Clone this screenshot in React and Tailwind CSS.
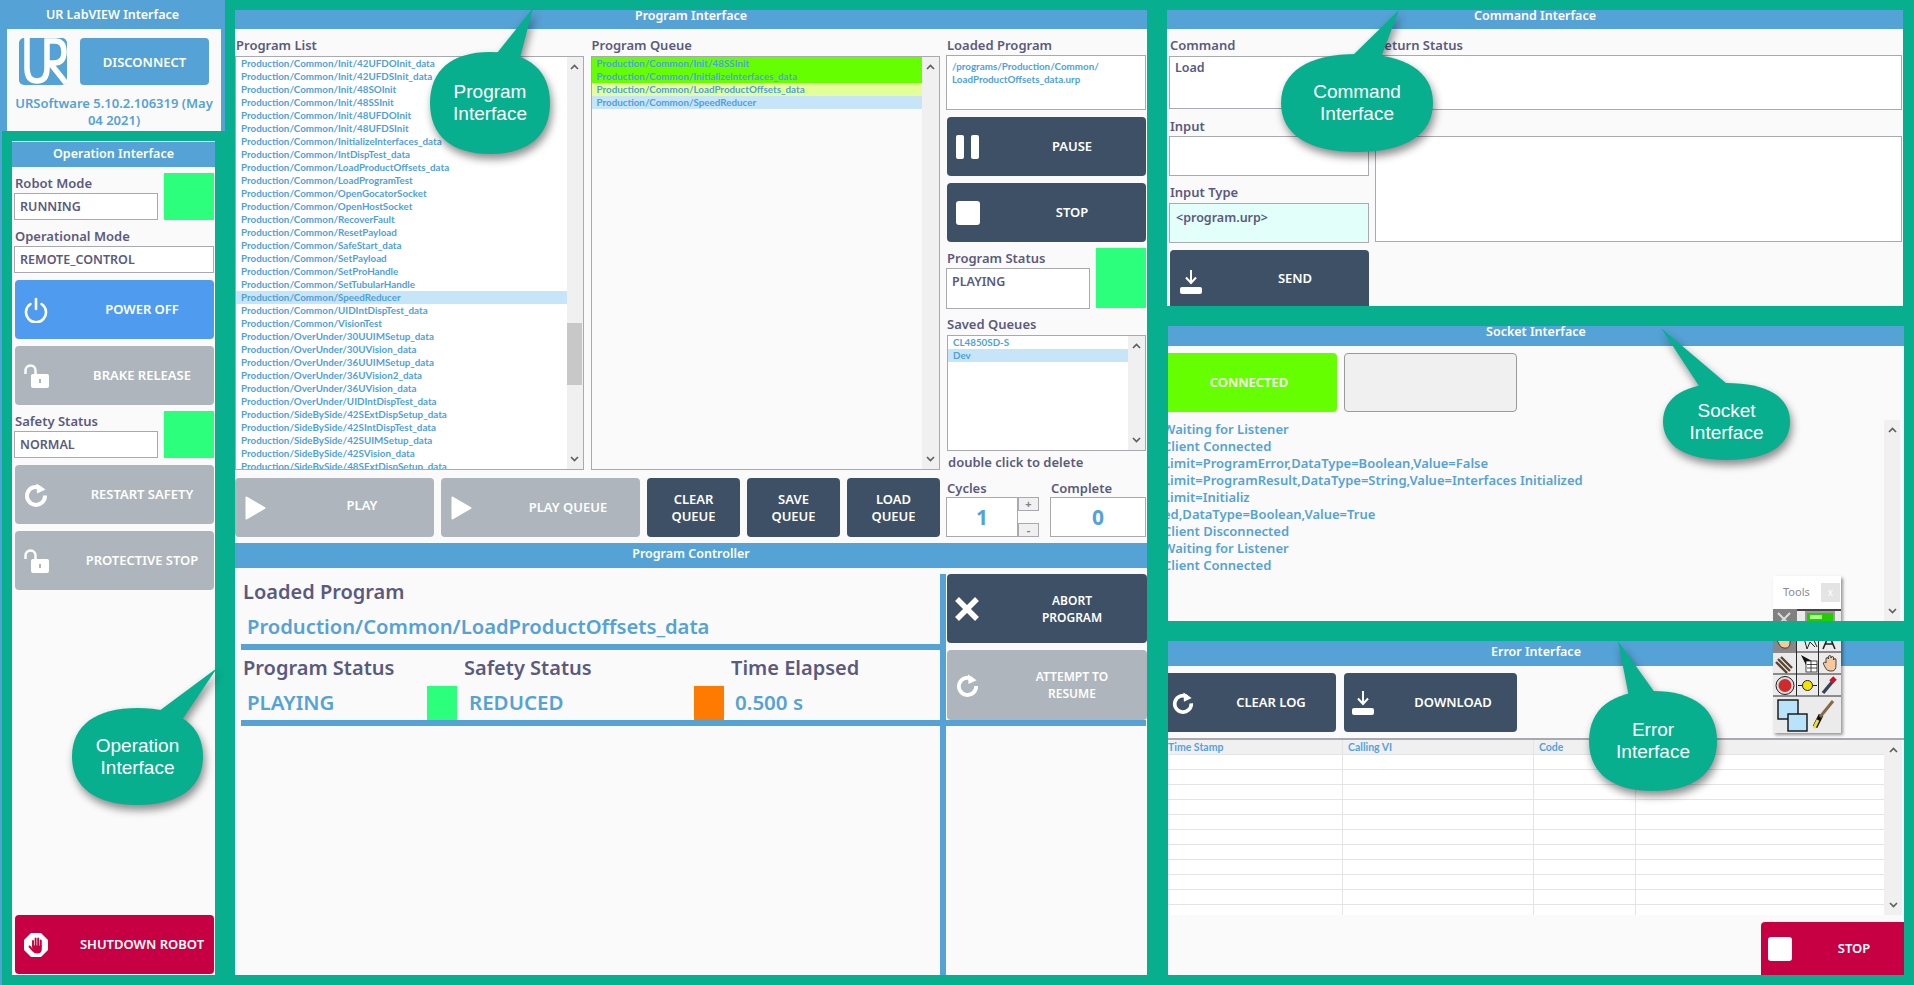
const listItems = [
  "Production/Common/Init/42UFDOInit_data",
  "Production/Common/Init/42UFDSInit_data",
  "Production/Common/Init/48SOInit",
  "Production/Common/Init/48SSInit",
  "Production/Common/Init/48UFDOInit",
  "Production/Common/Init/48UFDSInit",
  "Production/Common/InitializeInterfaces_data",
  "Production/Common/IntDispTest_data",
  "Production/Common/LoadProductOffsets_data",
  "Production/Common/LoadProgramTest",
  "Production/Common/OpenGocatorSocket",
  "Production/Common/OpenHostSocket",
  "Production/Common/RecoverFault",
  "Production/Common/ResetPayload",
  "Production/Common/SafeStart_data",
  "Production/Common/SetPayload",
  "Production/Common/SetProHandle",
  "Production/Common/SetTubularHandle",
  "Production/Common/SpeedReducer",
  "Production/Common/UIDIntDispTest_data",
  "Production/Common/VisionTest",
  "Production/OverUnder/30UUIMSetup_data",
  "Production/OverUnder/30UVision_data",
  "Production/OverUnder/36UUIMSetup_data",
  "Production/OverUnder/36UVision2_data",
  "Production/OverUnder/36UVision_data",
  "Production/OverUnder/UIDIntDispTest_data",
  "Production/SideBySide/42SExtDispSetup_data",
  "Production/SideBySide/42SIntDispTest_data",
  "Production/SideBySide/42SUIMSetup_data",
  "Production/SideBySide/42SVision_data",
  "Production/SideBySide/48SExtDispSetup_data",
];

const queueItems = [
  ["Production/Common/Init/48SSInit", "bg-[#66ff00]"],
  ["Production/Common/InitializeInterfaces_data", "bg-[#66ff00]"],
  ["Production/Common/LoadProductOffsets_data", "bg-[#e4ff9a]"],
  ["Production/Common/SpeedReducer", "bg-[#c7e5f8]"],
];

const logLines = [
  "Waiting for Listener",
  "Client Connected",
  "Limit=ProgramError,DataType=Boolean,Value=False",
  "Limit=ProgramResult,DataType=String,Value=Interfaces Initialized",
  "Limit=Initializ",
  "ed,DataType=Boolean,Value=True",
  "Client Disconnected",
  "Waiting for Listener",
  "Client Connected",
];

const rowText = "h-[13px] leading-[13px] pl-[5px] font-['Lato',sans-serif] text-[9.8px] font-bold text-[#4f9fe0] whitespace-nowrap";
const bigLabel = "text-[20px] leading-[24px] font-semibold text-[#5a5a80]";
const bigValue = "text-[20.5px] leading-[24px] font-semibold text-[#55a2d6] mt-[10px] whitespace-nowrap";

function PanelHeader({ title, className = "" }) {
  return (
    <div className={`bg-[#55a2d6] text-white text-center font-semibold text-[12.5px] shrink-0 ${className}`}>
      {title}
    </div>
  );
}

function Label({ children, className = "" }) {
  return <div className={`h-[18px] leading-[18px] text-[13px] font-semibold text-[#5a5a80] whitespace-nowrap ${className}`}>{children}</div>;
}

function Field({ children, className = "" }) {
  return (
    <div className={`border border-[#a9a9b0] bg-white text-[#5a5a80] font-semibold text-[12.5px] px-[5px] ${className}`}>
      {children}
    </div>
  );
}

function Btn({ label, icon, color = "bg-[#3d5066]", slot = "w-[55px] pr-[14px]", className = "", textClass = "" }) {
  return (
    <div className={`flex items-center rounded-[4px] text-white font-semibold text-[13px] ${color} ${className}`}>
      {icon && <div className={`flex justify-center items-center shrink-0 ${slot}`}>{icon}</div>}
      <div className={`flex-1 text-center leading-[17px] whitespace-pre-line ${textClass}`}>{label}</div>
    </div>
  );
}

function Chevron({ up }) {
  return (
    <svg width="9" height="6" viewBox="0 0 9 6" fill="none" stroke="#606060" strokeWidth="1.7">
      <path d={up ? "M1 5L4.5 1.5L8 5" : "M1 1L4.5 4.5L8 1"} />
    </svg>
  );
}

function Scrollbar({ className = "" }) {
  return (
    <div className={`bg-[#f0f0f0] flex flex-col justify-between items-center py-[7px] shrink-0 ${className}`}>
      <Chevron up />
      <Chevron />
    </div>
  );
}

function LockOpen() {
  return (
    <svg width="26" height="24" viewBox="0 0 26 24" fill="white">
      <path d="M2.5 10V6.5a5 5 0 0 1 10 0V10" fill="none" stroke="white" strokeWidth="2.4" />
      <rect x="8" y="10" width="18" height="14" rx="2" />
      <rect x="16" y="15" width="2" height="4" fill="#aeb5bc" />
    </svg>
  );
}

function Restart({ size = 24 }) {
  return (
    <svg width={size} height={size} viewBox="0 0 24 24" fill="none">
      <path d="M16.6 5.2A9 9 0 1 0 21 12.5" stroke="white" strokeWidth="4" />
      <path d="M12.5 0.5L21.5 6.5L13 10.5Z" fill="white" />
    </svg>
  );
}

function Power() {
  return (
    <svg width="24" height="26" viewBox="0 0 24 26" fill="none" stroke="white" strokeWidth="2.6" strokeLinecap="round">
      <path d="M12 2V12" />
      <path d="M6.5 7A10 10 0 1 0 17.5 7" />
    </svg>
  );
}

function DownloadIcon() {
  return (
    <svg width="22" height="25" viewBox="0 0 22 25" fill="white">
      <path d="M11 1V13M6 8.5L11 14L16 8.5" fill="none" stroke="white" strokeWidth="2" />
      <rect x="0" y="18" width="22" height="7" rx="2" />
    </svg>
  );
}

function PlayIcon() {
  return (
    <svg width="21" height="24" viewBox="0 0 21 24">
      <path d="M1.5 1.5L19.5 12L1.5 22.5Z" fill="white" stroke="white" strokeWidth="2" strokeLinejoin="round" />
    </svg>
  );
}

function Square({ className = "" }) {
  return <div className={`bg-white rounded-[3px] ${className}`} />;
}

function UrLogo() {
  return (
    <svg width="48" height="47" viewBox="0 0 48 47" className="shrink-0">
      <rect width="48" height="47" rx="5" fill="#55a2d6" />
      <path
        d="M8 0V30Q8 43 18 43Q28 43 28 30V3H36Q45 3 45 14Q45 25 35 25H31L47 45"
        fill="none"
        stroke="white"
        strokeWidth="5.5"
      />
    </svg>
  );
}

function ShutdownIcon() {
  return (
    <svg width="24" height="24" viewBox="0 0 24 24">
      <path d="M7 0H17L24 7V17L17 24H7L0 17V7Z" fill="white" />
      <path d="M9 13V8M11.6 13V5.5M14.2 13V5.5M16.8 13V7.5M5.5 13.5L9 17.5" stroke="#c60042" strokeWidth="1.9" strokeLinecap="round" />
      <path d="M8 12.5H17.8V16Q17.8 20.5 13 20.5Q10 20.5 8.5 18Z" fill="#c60042" />
    </svg>
  );
}

function bubblePath(w, h) {
  const k = 0.64;
  const cx = w / 2;
  const cy = h / 2;
  const dx = cx * k;
  const dy = cy * k;
  return `M${cx} 0C${cx + dx} 0 ${w} ${cy - dy} ${w} ${cy}C${w} ${cy + dy} ${cx + dx} ${h} ${cx} ${h}C${cx - dx} ${h} 0 ${cy + dy} 0 ${cy}C0 ${cy - dy} ${cx - dx} 0 ${cx} 0Z`;
}

function Callout({ pos, w, h, tail, lines }) {
  return (
    <div className={`absolute flex flex-col items-center justify-center z-20 ${pos}`}>
      <svg
        viewBox={`0 0 ${w} ${h}`}
        className="absolute inset-0 w-full h-full overflow-visible drop-shadow-[2px_5px_4px_rgba(0,0,0,0.45)]"
      >
        <path d={bubblePath(w, h)} fill="#07af8f" />
        <path d={tail} fill="#07af8f" />
      </svg>
      {lines.map((l) => (
        <div key={l} className="relative font-['Liberation_Sans',sans-serif] text-white text-[19px] leading-[22px]">
          {l}
        </div>
      ))}
    </div>
  );
}

function HandGlyph({ x, y }) {
  return (
    <g transform={`translate(${x} ${y})`} fill="#f5c9a0" stroke="#222" strokeWidth="0.8">
      <path d="M3 8V4Q3 2.5 4.2 2.5Q5.2 2.5 5.4 4V2Q5.5 .5 6.8 .5Q8 .5 8 2V3Q8.2 1.5 9.4 1.5Q10.6 1.5 10.6 3V5Q11 3.5 12 3.5Q13 3.5 13 5V10Q13 16 9 16H7Q4 16 2.5 13L0.5 9Q0 7.5 1.2 7.2Q2.2 7 3 8Z" />
    </g>
  );
}

// LabVIEW tools palette, drawn below its title bar
function ToolsPalette({ className = "" }) {
  return (
    <div className={`absolute left-[605px] w-[68px] shadow-[2px_2px_3px_rgba(0,0,0,0.4)] ${className}`}>
      <div className="h-[33px] bg-white flex items-center justify-between pl-[10px] pr-px">
        <span className="text-[11px] text-[#8a8a9a] font-normal">Tools</span>
        <div className="w-[19px] h-[19px] bg-[#e4e4e4] text-white text-[10px] text-center leading-[19px]">x</div>
      </div>
      <svg width="68" height="124" viewBox="0 0 68 124" className="block">
        <rect width="68" height="124" fill="#ebebeb" />
        <rect x="0" y="0" width="68" height="2" fill="#444" />
        <rect x="0" y="0" width="24" height="22" fill="#808080" />
        <path d="M5 4L17 16M17 4L5 16" stroke="#ddd" strokeWidth="2" />
        <path d="M12 13L17 18" stroke="#c22" strokeWidth="2" />
        <rect x="32" y="2" width="30" height="19" fill="#9a9a9a" />
        <rect x="34" y="4" width="26" height="15" fill="#22cc00" />
        <rect x="37" y="6" width="12" height="4" fill="#aaff88" />
        <rect x="0" y="22" width="24" height="20" fill="#888" />
        <HandGlyph x="4" y="23" />
        <path d="M30 25L34 40L37 33L42 38M38 25L44 38" stroke="#222" strokeWidth="1" fill="none" />
        <path d="M50 40L56 26L62 40M52 35H60M48 26H64" stroke="#222" strokeWidth="1.6" fill="none" />
        <path d="M0 43H68M0 65H68M0 87H68M23.5 22V87M45.5 22V87" stroke="#2a2a2a" strokeWidth="1" />
        <path d="M5 50L17 62M8 48L19 59M3 53L14 64" stroke="#5a4630" strokeWidth="2.4" />
        <path d="M28 46L33 56L35 52L39 52Z" fill="#111" />
        <rect x="33" y="52" width="11" height="11" fill="#fff" stroke="#222" strokeWidth="0.8" />
        <path d="M34 55.5H44M34 59H44M38 52V63" stroke="#222" strokeWidth="0.8" />
        <HandGlyph x="50" y="46" />
        <circle cx="12" cy="76.5" r="9" fill="#ddd" stroke="#222" />
        <circle cx="12" cy="76.5" r="6.5" fill="#d02b2b" />
        <circle cx="34.5" cy="76.5" r="5" fill="#f4e400" stroke="#222" />
        <path d="M25 76.5H29.5M39.5 76.5H44" stroke="#222" strokeWidth="1.2" />
        <path d="M50 84L60 72" stroke="#345" strokeWidth="3.4" />
        <path d="M58 73L62 69" stroke="#d01030" strokeWidth="5" />
        <rect x="5" y="91" width="20" height="19" fill="#b9e3fb" stroke="#111" strokeWidth="1.4" />
        <rect x="15" y="105" width="19" height="17" fill="#b9e3fb" stroke="#111" strokeWidth="1.4" />
        <path d="M42 118L48 106" stroke="#111" strokeWidth="5" />
        <path d="M47 108L60 92" stroke="#8a6a44" strokeWidth="3" />
        <path d="M41 119L45 111" stroke="#f0e020" strokeWidth="3" />
      </svg>
    </div>
  );
}

function OperationColumn() {
  return (
    <div className="w-[235px] shrink-0 flex flex-col border-l-2 border-[#55a2d6]">
      <div className="-ml-[2px] w-[225px] h-[131px] bg-[#55a2d6] flex flex-col">
        <div className="h-[29px] text-center text-white font-semibold text-[12.5px] leading-[30px]">UR LabVIEW Interface</div>
        <div className="flex-1 mx-[7px] mr-[4px] bg-[#fafafa] px-[12px] pt-[9px]">
          <div className="flex gap-[13px]">
            <UrLogo />
            <Btn label="DISCONNECT" color="bg-[#55a2d6]" className="w-[131px] h-[47px]" textClass="pt-[2px]" />
          </div>
          <div className="mt-[10px] -mx-[8px] text-center text-[#55a2d6] font-semibold text-[13px] leading-[17px]">
            URSoftware 5.10.2.106319 (May 04 2021)
          </div>
        </div>
      </div>
      <div className="mt-[10px] ml-[10px] w-[203px] h-[834px] bg-[#fafafa] flex flex-col pl-[2px]">
        <PanelHeader title="Operation Interface" className="-ml-[2px] h-[26px] leading-[24px] border-t border-white" />
        <div className="flex mt-[6px]">
          <div className="w-[144px] pt-[1px]">
            <Label className="pl-[1px]">Robot Mode</Label>
            <Field className="h-[27px] leading-[25px] mt-[1px]">RUNNING</Field>
          </div>
          <div className="ml-[6px] w-[50px] h-[47px] bg-[#2bff7b]" />
        </div>
        <Label className="mt-[7px] pl-[1px]">Operational Mode</Label>
        <Field className="h-[27px] leading-[25px] w-[200px] mt-px">REMOTE_CONTROL</Field>
        <Btn label="POWER OFF" icon={<Power />} color="bg-[#4f9bf0]" className="mt-[7px] ml-[1px] w-[199px] h-[59px]" />
        <Btn label="BRAKE RELEASE" icon={<LockOpen />} color="bg-[#aeb5bc]" className="mt-[7px] ml-[1px] w-[199px] h-[59px]" />
        <div className="flex mt-[6px]">
          <div className="w-[144px] pt-[1px]">
            <Label className="pl-[1px]">Safety Status</Label>
            <Field className="h-[27px] leading-[25px] mt-[1px]">NORMAL</Field>
          </div>
          <div className="ml-[6px] w-[50px] h-[47px] bg-[#2bff7b]" />
        </div>
        <Btn label="RESTART SAFETY" icon={<Restart />} color="bg-[#aeb5bc]" className="mt-[7px] ml-[1px] w-[199px] h-[59px]" />
        <Btn label="PROTECTIVE STOP" icon={<LockOpen />} color="bg-[#aeb5bc]" className="mt-[7px] ml-[1px] w-[199px] h-[59px]" />
        <Btn label="SHUTDOWN ROBOT" icon={<ShutdownIcon />} color="bg-[#c60042]" className="mt-auto mb-px ml-[1px] w-[199px] h-[59px]" />
      </div>
    </div>
  );
}

function ProgramPanel() {
  return (
    <div className="mt-[10px] w-[912px] h-[965px] bg-[#fafafa] flex flex-col shrink-0">
      <PanelHeader title="Program Interface" className="h-[19px] leading-[11px]" />
      <div className="flex h-[514px] pt-[7px]">
        <div className="w-[705px] flex flex-col">
          <div className="flex">
            <div className="w-[349px]">
              <Label className="pl-px">Program List</Label>
              <div className="relative mt-[2px] h-[414px] border border-[#a9a9b0] bg-white flex overflow-hidden">
                <div className="flex-1 overflow-hidden">
                  {listItems.map((item) => (
                    <div key={item} className={`${rowText} ${item.endsWith("SpeedReducer") ? "bg-[#c7e5f8]" : ""}`}>
                      {item}
                    </div>
                  ))}
                </div>
                <Scrollbar className="w-[16px]" />
                <div className="absolute right-[1px] top-[266px] w-[15px] h-[62px] bg-[#c8c8c8]" />
              </div>
            </div>
            <div className="w-[350px] ml-[7px]">
              <Label className="pl-px">Program Queue</Label>
              <div className="mt-[2px] h-[414px] border border-[#a9a9b0] bg-[#fafafa] flex overflow-hidden">
                <div className="flex-1">
                  {queueItems.map(([item, bg]) => (
                    <div key={item} className={`${rowText} ${bg}`}>
                      {item}
                    </div>
                  ))}
                </div>
                <Scrollbar className="w-[17px]" />
              </div>
            </div>
          </div>
          <div className="flex mt-[8px] gap-[7px]">
            <Btn label="PLAY" icon={<PlayIcon />} color="bg-[#aeb5bc]" className="w-[199px] h-[59px]" textClass="-mt-[4px]" />
            <Btn label="PLAY QUEUE" icon={<PlayIcon />} color="bg-[#aeb5bc]" className="w-[199px] h-[59px]" />
            <Btn label={"CLEAR\nQUEUE"} className="w-[93px] h-[59px]" />
            <Btn label={"SAVE\nQUEUE"} className="w-[93px] h-[59px]" />
            <Btn label={"LOAD\nQUEUE"} className="w-[93px] h-[59px]" />
          </div>
        </div>
        <div className="w-[200px] ml-[6px]">
          <Label className="pl-px">Loaded Program</Label>
          <div className="h-[55px] mt-[1px] border border-[#a9a9b0] bg-white px-[5px] pt-[4px] font-['Lato',sans-serif] text-[9.8px] leading-[12.5px] font-bold text-[#4f9fe0]">
            /programs/Production/Common/
            <br />
            LoadProductOffsets_data.urp
          </div>
          <Btn
            label="PAUSE"
            slot="w-[51px] pr-[10px]"
            className="mt-[7px] ml-[1px] h-[59px]"
            icon={
              <div className="flex gap-[7px]">
                <div className="w-[8px] h-[24px] bg-white rounded-[2px]" />
                <div className="w-[8px] h-[24px] bg-white rounded-[2px]" />
              </div>
            }
          />
          <Btn label="STOP" slot="w-[51px] pr-[10px]" className="mt-[7px] ml-[1px] h-[59px]" icon={<Square className="w-[24px] h-[24px]" />} />
          <div className="flex mt-[6px] h-[60px]">
            <div className="w-[144px]">
              <Label className="mt-[1px] pl-px">Program Status</Label>
              <Field className="h-[41px] leading-[26px] mt-px">PLAYING</Field>
            </div>
            <div className="ml-[6px] w-[50px] bg-[#2bff7b]" />
          </div>
          <Label className="mt-[7px] pl-px">Saved Queues</Label>
          <div className="mt-[2px] ml-px h-[116px] border border-[#a9a9b0] bg-white flex overflow-hidden">
            <div className="flex-1 font-['Lato',sans-serif] text-[9.8px] font-bold text-[#4f9fe0]">
              <div className="h-[13px] leading-[13px] pl-[5px]">CL4850SD-S</div>
              <div className="h-[13px] leading-[13px] pl-[5px] bg-[#c7e5f8]">Dev</div>
            </div>
            <Scrollbar className="w-[17px]" />
          </div>
          <Label className="mt-[2px] pl-[2px]">double click to delete</Label>
          <div className="flex mt-[8px] justify-between">
            <div className="w-[93px]">
              <Label className="pl-px">Cycles</Label>
              <div className="flex h-[40px]">
                <div className="w-[72px] border border-[#a9a9b0] bg-white text-center text-[#55a2d6] font-bold text-[21px] leading-[38px]">1</div>
                <div className="w-[21px] flex flex-col justify-between">
                  <div className="h-[14px] border border-[#a9a9b0] bg-[#f0f0f0] text-center text-[#808080] font-bold text-[11px] leading-[12px]">+</div>
                  <div className="h-[14px] border border-[#a9a9b0] bg-[#f0f0f0] text-center text-[#808080] font-bold text-[11px] leading-[12px]">-</div>
                </div>
              </div>
            </div>
            <div className="w-[96px]">
              <Label className="pl-px">Complete</Label>
              <div className="h-[40px] border border-[#a9a9b0] bg-white text-center text-[#55a2d6] font-bold text-[21px] leading-[38px]">0</div>
            </div>
          </div>
        </div>
      </div>
      <div className="h-[25px] bg-[#55a2d6] text-white text-center font-semibold text-[12.5px] leading-[22px] shrink-0">Program Controller</div>
      <div className="flex h-[152px] pt-[6px] shrink-0">
        <div className="w-[705px] pl-[6px]">
          <div className={`${bigLabel} pt-[6px] pl-[2px]`}>Loaded Program</div>
          <div className={`${bigValue} !text-[20.2px] pl-[6px]`}>Production/Common/LoadProductOffsets_data</div>
          <div className="h-[6px] bg-[#55a2d6] mt-[6px]" />
          <div className="flex h-[70px]">
            <div className="w-[186px] pt-[6px]">
              <div className={`${bigLabel} pl-[2px]`}>Program Status</div>
              <div className={`${bigValue} pl-[6px]`}>PLAYING</div>
            </div>
            <div className="w-[30px] h-[34px] self-end bg-[#2bff7b]" />
            <div className="w-[237px] pt-[6px] pl-[7px]">
              <div className={bigLabel}>Safety Status</div>
              <div className={`${bigValue} pl-[5px]`}>REDUCED</div>
            </div>
            <div className="w-[30px] h-[34px] self-end bg-[#ff7a00]" />
            <div className="pt-[6px] pl-[7px]">
              <div className={bigLabel}>Time Elapsed</div>
              <div className={`${bigValue} pl-[4px]`}>0.500 s</div>
            </div>
          </div>
        </div>
        <div className="w-[6px] bg-[#55a2d6]" />
        <div className="w-[200px] ml-px">
          <Btn
            label={"ABORT\nPROGRAM"}
            slot="w-[50px] pr-[10px]"
            className="h-[69px]"
            textClass="text-[12px]"
            icon={
              <svg width="26" height="24" viewBox="0 0 26 24" fill="none" stroke="white" strokeWidth="5.5">
                <path d="M3 2L23 22M23 2L3 22" />
              </svg>
            }
          />
          <Btn
            label={"ATTEMPT TO\nRESUME"}
            slot="w-[50px] pr-[10px]"
            color="bg-[#aeb5bc]"
            className="mt-[7px] h-[70px]"
            textClass="text-[12px]"
            icon={<Restart size={23} />}
          />
        </div>
      </div>
      <div className="h-[6px] bg-[#55a2d6] ml-[6px] mr-px shrink-0" />
      <div className="flex-1 flex">
        <div className="w-[705px]" />
        <div className="w-[6px] bg-[#55a2d6]" />
      </div>
    </div>
  );
}

function CommandPanel() {
  return (
    <div className="h-[296px] mt-[10px] bg-[#fafafa] w-[736px] flex flex-col overflow-hidden">
      <PanelHeader title="Command Interface" className="h-[19px] leading-[11px]" />
      <div className="flex pt-[7px] pl-[2px]">
        <div className="w-[200px]">
          <Label className="pl-px">Command</Label>
          <Field className="h-[53px] mt-[2px] leading-[22px]">Load</Field>
          <Label className="mt-[8px] pl-px">Input</Label>
          <Field className="h-[40px] mt-px" />
          <Label className="mt-[7px] pl-px">Input Type</Label>
          <Field className="h-[40px] mt-[2px] !bg-[#e3fff9] leading-[28px] pl-[6px]">{"<program.urp>"}</Field>
          <Btn
            label="SEND"
            slot="w-[51px] pr-[10px]"
            className="mt-[7px] ml-px h-[62px] w-[199px] rounded-b-none"
            textClass="-mt-[6px]"
            icon={<DownloadIcon />}
          />
        </div>
        <div className="ml-[6px] w-[527px]">
          <Label className="pl-px">Return Status</Label>
          <div className="h-[55px] mt-px border border-[#a9a9b0] bg-white" />
          <div className="h-[106px] mt-[26px] border border-[#a9a9b0] bg-white" />
        </div>
      </div>
    </div>
  );
}

function SocketPanel() {
  return (
    <div className="relative h-[295px] mt-[20px] ml-px w-[736px] bg-[#fafafa] flex flex-col overflow-hidden">
      <PanelHeader title="Socket Interface" className="h-[20px] leading-[12px]" />
      <div className="flex mt-[7px] gap-[7px]">
        <Btn label="CONNECTED" color="bg-[#66ff00]" className="w-[169px] h-[59px] rounded-l-none" textClass="pr-[7px]" />
        <div className="w-[173px] h-[59px] bg-[#f0f0f0] border border-[#9a9a9a] rounded-[4px]" />
      </div>
      <div className="flex flex-1 mt-[8px] min-h-0">
        <div className="flex-1 overflow-hidden pt-[1px]">
          {logLines.map((l, i) => (
            <div key={i} className="-ml-[5px] h-[17px] leading-[17px] text-[13px] font-semibold text-[#55a2d6] whitespace-nowrap">
              {l}
            </div>
          ))}
        </div>
        <Scrollbar className="w-[16px] mr-[4px]" />
      </div>
      <ToolsPalette className="top-[250px]" />
    </div>
  );
}

function ErrorPanel() {
  return (
    <div className="relative h-[334px] mt-[20px] ml-px w-[736px] bg-[#fafafa] flex flex-col overflow-hidden">
      <PanelHeader title="Error Interface" className="h-[25px] leading-[22px]" />
      <div className="flex mt-[7px] gap-[8px]">
        <Btn label="CLEAR LOG" slot="w-[38px] pr-[8px]" className="w-[168px] h-[59px] rounded-l-none" icon={<Restart size={22} />} />
        <Btn label="DOWNLOAD" slot="w-[45px] pr-[7px]" className="w-[173px] h-[59px]" icon={<DownloadIcon />} />
      </div>
      <div className="flex mt-[6px] h-[177px] border-t-2 border-[#a9a9b0]">
        <div className="flex-1 overflow-hidden bg-white">
          <div className="grid grid-cols-[175px_191px_102px_1fr] h-[15px] bg-[#f0f0f0] border-b border-[#e4e4e4] font-['Lato',sans-serif] text-[10.5px] leading-[14px] font-bold text-[#55a2e0]">
            <div className="border-r border-[#e4e4e4]">Time Stamp</div>
            <div className="border-r border-[#e4e4e4] pl-[5px]">Calling VI</div>
            <div className="border-r border-[#e4e4e4] pl-[5px]">Code</div>
            <div />
          </div>
          {Array.from({ length: 11 }).map((_, i) => (
            <div key={i} className="grid grid-cols-[175px_191px_102px_1fr] h-[15px] border-b border-[#e4e4e4]">
              <div className="border-r border-[#e4e4e4]" />
              <div className="border-r border-[#e4e4e4]" />
              <div className="border-r border-[#e4e4e4]" />
              <div />
            </div>
          ))}
        </div>
        <Scrollbar className="w-[18px] mr-[2px]" />
      </div>
      <div className="flex justify-end mt-auto">
        <Btn label="STOP" slot="w-[43px] pr-[5px]" color="bg-[#c60042]" className="w-[143px] h-[53px] rounded-b-none rounded-r-none" icon={<Square className="w-[24px] h-[24px]" />} />
      </div>
      <ToolsPalette className="-top-[65px]" />
    </div>
  );
}

export default function App() {
  return (
    <div className="relative w-[1914px] h-[985px] bg-[#07af8f] overflow-hidden flex font-['Noto_Sans',sans-serif]">
      <OperationColumn />
      <ProgramPanel />
      <div className="ml-[20px] flex flex-col">
        <CommandPanel />
        <SocketPanel />
        <ErrorPanel />
      </div>
      <Callout
        pos="left-[430px] top-[52px] w-[120px] h-[102px]"
        w={120}
        h={102}
        tail="M63 6L103 -44L90 6Z"
        lines={["Program", "Interface"]}
      />
      <Callout
        pos="left-[1281px] top-[54px] w-[152px] h-[98px]"
        w={152}
        h={98}
        tail="M67 6L118 -44L99 6Z"
        lines={["Command", "Interface"]}
      />
      <Callout
        pos="left-[1663px] top-[383px] w-[127px] h-[77px]"
        w={127}
        h={77}
        tail="M38 6L-2 -55L70 6Z"
        lines={["Socket", "Interface"]}
      />
      <Callout
        pos="left-[1589px] top-[691px] w-[128px] h-[100px]"
        w={128}
        h={100}
        tail="M40 6L29 -50L69 6Z"
        lines={["Error", "Interface"]}
      />
      <Callout
        pos="left-[72px] top-[708px] w-[131px] h-[97px]"
        w={131}
        h={97}
        tail="M83 6L145 -40L110 12Z"
        lines={["Operation", "Interface"]}
      />
    </div>
  );
}
